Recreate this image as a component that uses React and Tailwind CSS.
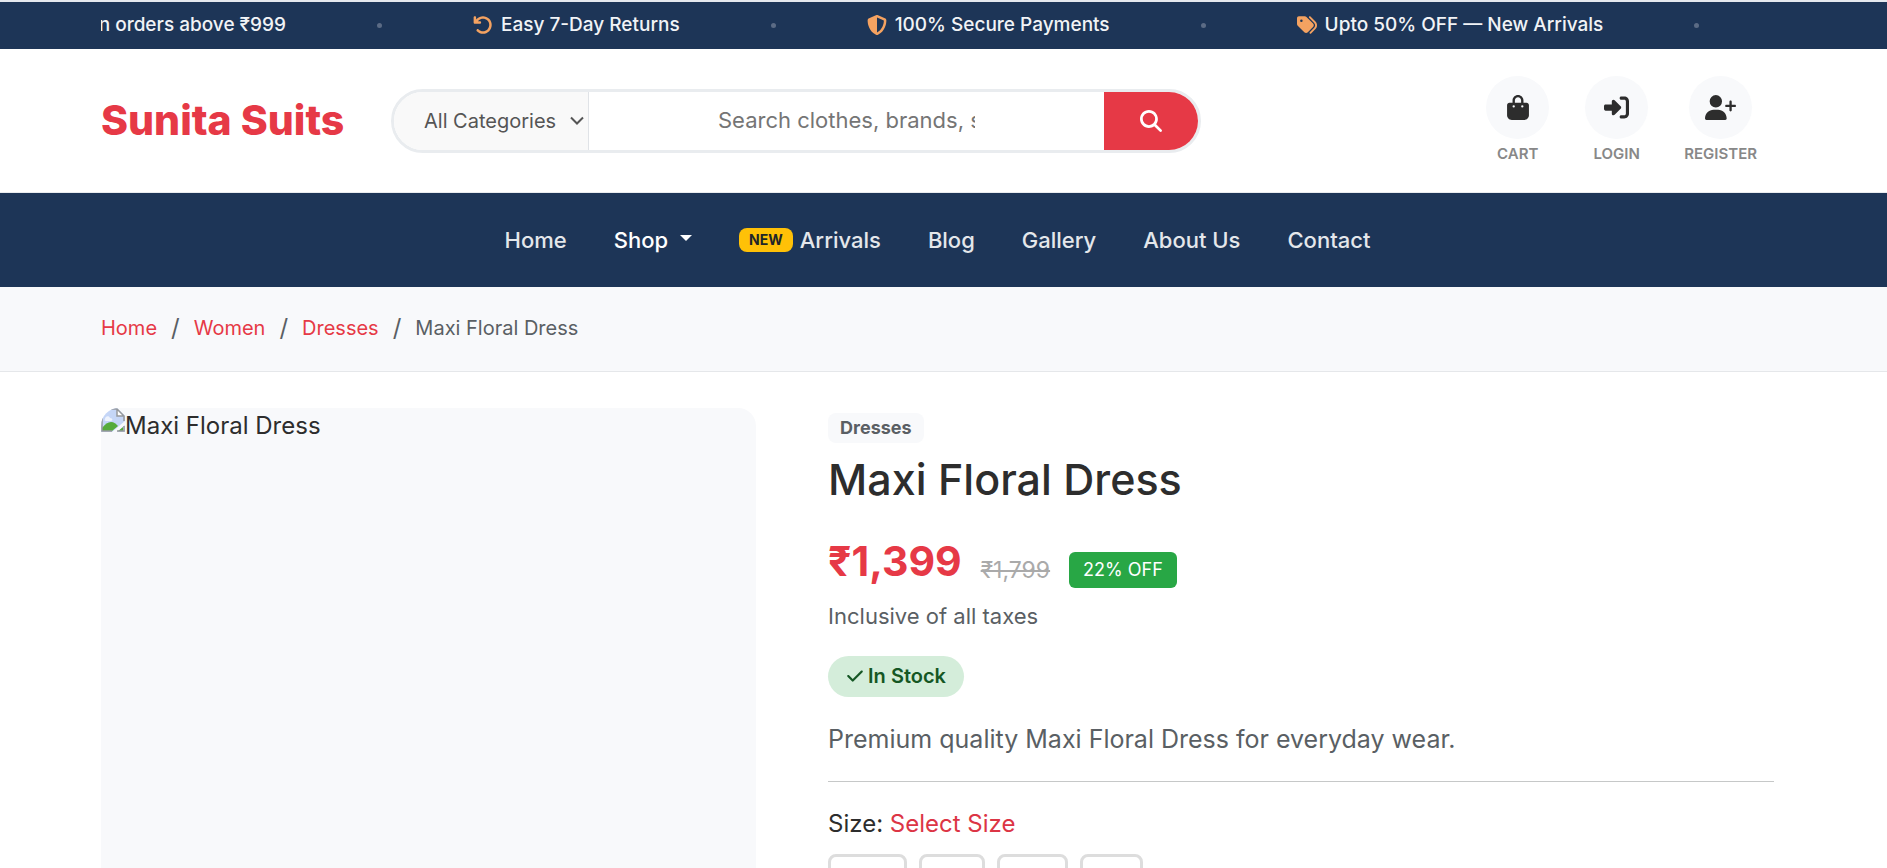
import React from 'react';
import {
  FaArrowRotateLeft,
  FaBagShopping,
  FaCheck,
  FaMagnifyingGlass,
  FaRightToBracket,
  FaShieldHalved,
  FaTags,
  FaUserPlus,
} from 'react-icons/fa6';

const container = 'pl-[101px] pr-[113px]';

const offers = [
  { icon: FaArrowRotateLeft, text: 'Easy 7-Day Returns' },
  { icon: FaShieldHalved, text: '100% Secure Payments' },
  { icon: FaTags, text: 'Upto 50% OFF — New Arrivals' },
];

const accountLinks = [
  { icon: FaBagShopping, label: 'CART', iconWidth: 'w-[22px]' },
  { icon: FaRightToBracket, label: 'LOGIN', iconWidth: 'w-[25px]' },
  { icon: FaUserPlus, label: 'REGISTER', iconWidth: 'w-[31px]' },
];

const navLinks = [
  { label: 'Home' },
  { label: 'Shop', dropdown: true },
  { label: 'Arrivals', badge: 'NEW' },
  { label: 'Blog' },
  { label: 'Gallery' },
  { label: 'About Us' },
  { label: 'Contact' },
];

const crumbs = ['Home', 'Women', 'Dresses'];

const Dot = () => <span className="w-[5px] h-[5px] shrink-0 rounded-full bg-[#5b6b85]" />;

const OfferBar = () => (
  <div className={`bg-[#1d3557] border-t-2 border-[#e4e8ee] ${container}`}>
    <div className="flex items-center gap-[91px] h-[47px] pb-px overflow-hidden whitespace-nowrap text-[19px] font-medium text-[#f1f3f6]">
      <div className="flex justify-end w-[185px] shrink-0 overflow-hidden">
        <span>n orders above ₹999</span>
      </div>
      <Dot />
      {offers.map(({ icon: Icon, text }) => (
        <React.Fragment key={text}>
          <div className="flex items-center shrink-0 gap-2">
            <Icon className="h-5 w-5 text-[#f4a261]" />
            <span>{text}</span>
          </div>
          <Dot />
        </React.Fragment>
      ))}
    </div>
  </div>
);

const SearchBar = () => (
  <form className="flex w-[810px] h-16 rounded-full border-[3px] border-[#e9ecef] overflow-hidden bg-white">
    <div className="relative w-[195px] shrink-0">
      <select
        aria-label="Category"
        className="w-full h-full pl-[30px] appearance-none bg-[#f9f9f9] border-r border-[#e0e3e7] text-xl text-[#555]"
      >
        <option>All Categories</option>
      </select>
      <svg viewBox="0 0 16 10" className="absolute right-1 top-1/2 -translate-y-1/2 w-4 h-[10px] pointer-events-none" fill="none" stroke="#555" strokeWidth="2">
        <path d="M2 1.5l6 6 6-6" />
      </svg>
    </div>
    <input
      type="text"
      aria-label="Search"
      placeholder="Search clothes, brands, styles..."
      className="flex-1 min-w-0 px-[129px] text-[22px] placeholder:text-[#757575] outline-none"
    />
    <button type="submit" aria-label="Search" className="flex items-center justify-center w-[94px] shrink-0 bg-[#e63946] text-white">
      <FaMagnifyingGlass className="text-[22px]" />
    </button>
  </form>
);

const Header = () => (
  <header className={`bg-white border-b border-[#e9ecef] ${container}`}>
    <div className="flex items-center h-[143px]">
      <a href="#" className="w-[290px] shrink-0 text-[41px] font-extrabold leading-none text-[#e63946] whitespace-nowrap">
        Sunita Suits
      </a>
      <SearchBar />
      <div className="flex gap-9 ml-auto pr-[17px]">
        {accountLinks.map(({ icon: Icon, label, iconWidth }) => (
          <a key={label} href="#" className="flex flex-col items-center gap-1">
            <span className="flex items-center justify-center w-[63px] h-[63px] rounded-full bg-[#f8f9fb] text-[#2d2d2d]">
              <Icon className={`h-[25px] ${iconWidth}`} />
            </span>
            <span className="text-[15px] leading-[22px] font-semibold text-[#888]">{label}</span>
          </a>
        ))}
      </div>
    </div>
  </header>
);

const NavBar = () => (
  <nav className={`bg-[#1d3557] ${container}`}>
    <ul className="flex items-center justify-center gap-[47px] h-[94px] text-[22px] font-medium text-[#e4e7eb]">
      {navLinks.map(({ label, badge, dropdown }) => (
        <li key={label}>
          <a href="#" className={`flex items-center ${dropdown ? 'text-white' : ''}`}>
            {badge && (
              <span className="mr-[7px] px-[10px] h-6 leading-6 rounded-lg bg-[#ffc107] text-sm font-bold text-[#212529]">{badge}</span>
            )}
            {label}
            {dropdown && <span className="ml-3 mb-1 border-x-6 border-t-6 border-x-transparent border-t-white" />}
          </a>
        </li>
      ))}
    </ul>
  </nav>
);

const Breadcrumb = () => (
  <div className={`bg-[#f8f9fb] border-b border-[#e5e7ea] ${container}`}>
    <ol className="flex items-center h-[84px] pb-0.5 text-xl text-[#5a5f64]">
      {crumbs.map((crumb) => (
        <li key={crumb} className="flex items-center">
          <a href="#" className="text-[#e63946]">{crumb}</a>
          <span className="px-[14px] text-2xl">/</span>
        </li>
      ))}
      <li>Maxi Floral Dress</li>
    </ol>
  </div>
);

// Placeholder drawn while the product photo is missing
const MissingImage = () => (
  <svg viewBox="0 0 24 24" className="w-6 h-6 shrink-0" aria-hidden="true">
    <path d="M0 0h16l8 8v16H0z" fill="#c5d6f7" />
    <path d="M4 11c0-3 4-4 5-1 3 0 3 3 1 3H5c-1 0-2-1-1-2z" fill="#eef3fd" />
    <path d="M1 23v-3c3-4 6-6 9-6 3 0 5 2 7 4l-6 5z" fill="#55ab3b" />
    <path d="M16 23h6v-4z" fill="#55ab3b" />
    <path d="M24 13v4l-8 7h-5z" fill="#f8f9fb" />
    <path d="M16 1v7h7z" fill="#fff" />
    <path d="M11 23H1V1h15l7 7v5M16 1v7h7M16 23h7v-5" fill="none" stroke="#96999d" strokeWidth="1.5" />
  </svg>
);

const Gallery = () => (
  <div className="w-5/12 px-9">
    <div className="h-[600px] rounded-[18px] overflow-hidden bg-[#f8f9fb]">
      <div className="flex text-2xl leading-9 text-[#2d2d2d]">
        <MissingImage />
        Maxi Floral Dress
      </div>
    </div>
  </div>
);

const sizes = [
  { label: 'XXL', width: 'w-[79px]' },
  { label: 'M', width: 'w-[66px]' },
  { label: 'XL', width: 'w-[71px]' },
  { label: 'L', width: 'w-[63px]' },
];

const ProductInfo = () => (
  <div className="w-7/12 px-9 pt-[5px] text-[#2d2d2d]">
    <span className="block w-fit px-3 h-[30px] leading-[30px] rounded-lg bg-[#f8f9fb] text-lg font-bold text-[#5a5f64]">Dresses</span>
    <h1 className="mt-2 text-[43px] leading-[56px] font-medium">Maxi Floral Dress</h1>
    <div className="flex items-end gap-[19px] mt-7">
      <span className="text-[41px] leading-[53px] font-bold text-[#e63946]">₹1,399</span>
      <del className="text-[23px] leading-9 text-[#aaa]">₹1,799</del>
      <span className="px-[14px] h-9 leading-9 rounded-md bg-[#28a745] text-lg text-white">22% OFF</span>
    </div>
    <p className="mt-3 text-[22px] leading-8 text-[#5a5f64]">Inclusive of all taxes</p>
    <span className="flex items-center w-fit gap-1 mt-6 px-[18px] h-[41px] pb-0.5 rounded-full bg-[#d4edda] text-xl font-semibold text-[#155724]">
      <FaCheck className="text-lg" />
      In Stock
    </span>
    <p className="mt-6 text-[25px] leading-9 text-[#5a5f64]">Premium quality Maxi Floral Dress for everyday wear.</p>
    <hr className="mt-6 border-t border-[#c6c8c8]" />
    <p className="mt-6 text-2xl leading-9">
      Size: <span className="text-[#dc3545]">Select Size</span>
    </p>
    <div className="flex gap-3 mt-3">
      {sizes.map(({ label, width }) => (
        <button key={label} type="button" className={`${width} h-[60px] rounded-lg border-[3px] border-[#ddd] bg-white text-xl`}>
          {label}
        </button>
      ))}
    </div>
  </div>
);

const App = () => {
  return (
    <div className="min-h-screen bg-white font-['Inter',sans-serif]">
      <OfferBar />
      <Header />
      <NavBar />
      <Breadcrumb />
      <main className={container}>
        <div className="flex -mx-9 pt-9">
          <Gallery />
          <ProductInfo />
        </div>
      </main>
    </div>
  );
};

export default App;
